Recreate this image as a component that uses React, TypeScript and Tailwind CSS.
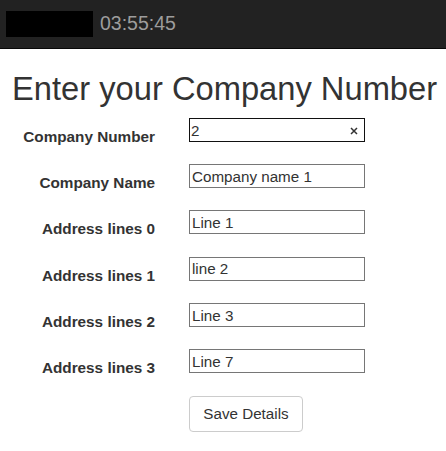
import React from "react";

const rows = [
  { label: "Company Name", value: "Company name 1" },
  { label: "Address lines 0", value: "Line 1" },
  { label: "Address lines 1", value: "line 2" },
  { label: "Address lines 2", value: "Line 3" },
  { label: "Address lines 3", value: "Line 7" },
];

export default function App() {
  return (
    <div className="w-[446px] h-[451px] bg-white overflow-hidden" style={{ fontFamily: '"Liberation Sans", Arial, sans-serif' }}>
      <div className="h-[49px] bg-[#222222] border-b border-[#080808] flex items-center">
        <div className="ml-[6px] w-[87px] h-[26px] bg-black" />
        <span className="ml-[7px] text-[19.5px] leading-none text-[#9d9d9d]">03:55:45</span>
      </div>
      <h1 className="mt-[22px] text-[32.7px] leading-[36px] text-[#333333] pl-[12px] whitespace-nowrap">
        Enter your Company Number
      </h1>
      <div className="mt-[11px] flex flex-col gap-[22.2px]">
        <div className="flex items-start h-[24px]">
          <label className="w-[155px] text-right font-bold text-[15.3px] leading-[20px] text-[#333333] mt-[9px]">Company Number</label>
          <div className="ml-[34px] w-[176px] h-[24px] border-[1.5px] border-[#111111] flex items-center justify-between pl-[1px] pr-[6px] pt-[1px]">
            <span className="text-[15.2px] text-[#333333] leading-none">2</span>
            <svg width="8" height="8" viewBox="0 0 8 8">
              <path d="M1 1 L7 7 M7 1 L1 7" stroke="#333" strokeWidth="1.5" />
            </svg>
          </div>
        </div>
        {rows.map((r) => (
          <div key={r.label} className="flex items-start h-[24px]">
            <label className="w-[155px] text-right font-bold text-[15.3px] leading-[20px] text-[#333333] mt-[9px]">{r.label}</label>
            <div className="ml-[34px] w-[176px] h-[24px] border border-[#767676] flex items-center pl-[2px] pt-[1px]">
              <span className="text-[15.2px] text-[#333333] leading-none">{r.value}</span>
            </div>
          </div>
        ))}
      </div>
      <div className="mt-[23px] pl-[189px]">
        <button className="w-[114px] h-[36px] border border-[#cccccc] rounded-[4px] bg-white text-[15.2px] text-[#333333]">
          Save Details
        </button>
      </div>
    </div>
  );
}
